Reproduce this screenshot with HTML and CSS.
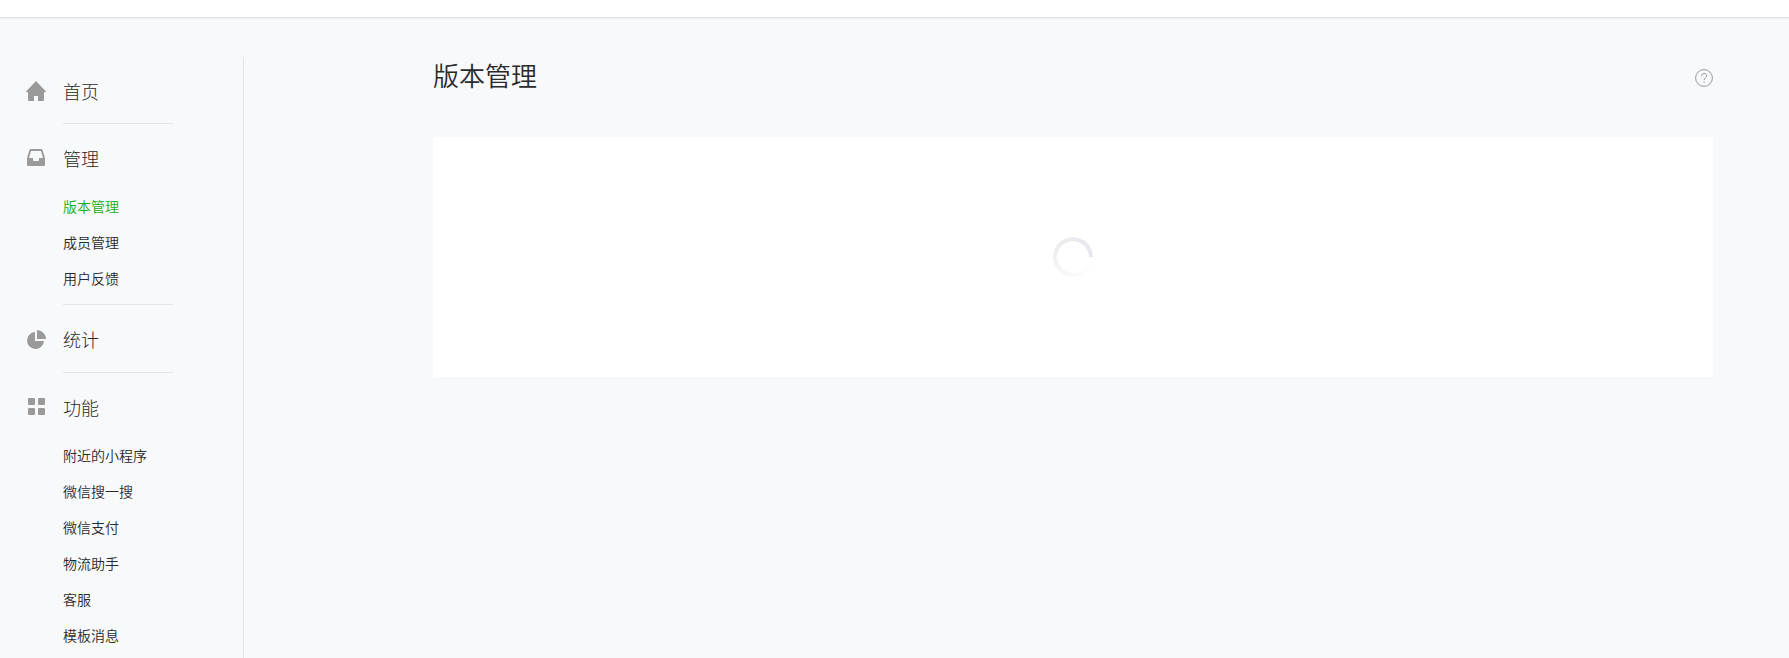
FILE: index.html
```html
<!DOCTYPE html>
<html lang="zh-CN">
<head>
    <meta charset="UTF-8">
    <meta name="viewport" content="width=device-width, initial-scale=1.0">
    <title>版本管理</title>
    <link rel="stylesheet" href="styles.css">
</head>
<body>
    <header class="header"></header>
    <div class="container">
        <nav class="side">
            <div class="menu">
                <a class="menu-title" href="#">
                    <svg class="icon" viewBox="0 0 22 22"><path d="M11 1L21.5 12H19v8a1 1 0 0 1-1 1h-5v-5H9v5H4a1 1 0 0 1-1-1v-8H.5z"/></svg>
                    首页
                </a>
            </div>
            <div class="menu">
                <a class="menu-title" href="#">
                    <svg class="icon" viewBox="0 0 22 22"><path fill-rule="evenodd" d="M5.500 2h11a1 1 0 0 1 1 .8L20 11v7a1 1 0 0 1-1 1H3a1 1 0 0 1-1-1v-7l2.500-8.200a1 1 0 0 1 1-.8zM6 4l-2 7h4v2a1 1 0 0 0 1 1h4a1 1 0 0 0 1-1v-2h4l-2-7z"/></svg>
                    管理
                </a>
                <ul class="menu-list">
                    <li><a class="active" href="#">版本管理</a></li>
                    <li><a href="#">成员管理</a></li>
                    <li><a href="#">用户反馈</a></li>
                </ul>
            </div>
            <div class="menu">
                <a class="menu-title" href="#">
                    <svg class="icon" viewBox="0 0 22 22"><path d="M10 4v9h9a8.500 8.500 0 1 1-9-9z"/><path d="M12 2a9 9 0 0 1 9 9h-9z"/></svg>
                    统计
                </a>
            </div>
            <div class="menu">
                <a class="menu-title" href="#">
                    <svg class="icon" viewBox="0 0 22 22"><rect x="3" y="2" width="7" height="7" rx="1"/><rect x="13" y="2" width="7" height="7" rx="1"/><rect x="3" y="12" width="7" height="7" rx="1"/><rect x="13" y="12" width="7" height="7" rx="1"/></svg>
                    功能
                </a>
                <ul class="menu-list">
                    <li><a href="#">附近的小程序</a></li>
                    <li><a href="#">微信搜一搜</a></li>
                    <li><a href="#">微信支付</a></li>
                    <li><a href="#">物流助手</a></li>
                    <li><a href="#">客服</a></li>
                    <li><a href="#">模板消息</a></li>
                </ul>
            </div>
        </nav>
        <main class="main">
            <div class="main-head">
                <h2>版本管理</h2>
                <a class="help" href="#" aria-label="帮助">
                    <svg viewBox="0 0 18 18"><circle cx="9" cy="9" r="8.400"/><path d="M6.500 7.200C6.500 5.400 7.600 4.500 9 4.500s2.600.9 2.600 2.400c0 1.900-2.500 2-2.500 4.300M9.100 12.500v1.300"/></svg>
                </a>
            </div>
            <div class="card">
                <div class="loading"></div>
            </div>
        </main>
    </div>
</body>
</html>
```
FILE: styles.css
```css
body {
    margin: 0;
    min-height: 100vh;
    display: flex;
    flex-direction: column;
    background-color: #f8f9fb;
    color: #2a2a2a;
    font-family: "Noto Sans CJK SC", sans-serif;
    font-weight: 350;
    font-size: 14px;
}
a {
    color: inherit;
    text-decoration: none;
}
.header {
    height: 17px;
    background: #fff;
    border-bottom: 1px solid #e0e1e3;
    box-shadow: 0 1px 2px rgba(0, 0, 0, 0.05);
}
.container {
    flex: 1;
    display: flex;
    padding-top: 39px;
}
.side {
    width: 243px;
    flex-shrink: 0;
    border-right: 1px solid #e4e5e7;
}
.menu {
    padding-bottom: 3px;
}
.menu:first-child {
    padding-bottom: 2px;
}
.menu:last-child {
    padding-bottom: 0;
}
/* divider between menu groups */
.menu + .menu::before {
    content: "";
    display: block;
    width: 110px;
    height: 1px;
    margin-left: 63px;
    background: #e4e5e7;
}
.menu-title {
    display: flex;
    align-items: center;
    gap: 16px;
    box-sizing: border-box;
    height: 64px;
    padding: 3px 0 0 25px;
    font-size: 18px;
    font-weight: 300;
}
.icon {
    width: 22px;
    height: 22px;
    fill: #9a9a9a;
}
.menu-list {
    list-style: none;
    margin: 0;
    padding: 0 0 5px 63px;
}
.menu:last-child .menu-list {
    padding-bottom: 0;
}
.menu-list a {
    display: block;
    line-height: 36px;
}
.menu-list .active {
    color: #1aad19;
}
.main {
    flex: 1;
    padding: 0 76px 0 189px;
}
.main-head {
    display: flex;
    align-items: flex-start;
    justify-content: space-between;
    height: 40px;
    margin-bottom: 40px;
}
h2 {
    margin: 0;
    font-size: 26px;
    font-weight: 350;
    line-height: 36px;
}
.help {
    padding-top: 12px;
}
.help svg {
    display: block;
    width: 18px;
    height: 18px;
    fill: none;
    stroke: #9a9a9a;
}
.card {
    display: flex;
    align-items: center;
    justify-content: center;
    height: 240px;
    background: #fff;
}
.loading {
    width: 40px;
    height: 40px;
    border-radius: 50%;
    background: conic-gradient(from 90deg, #fff, #fafafc 25%, #ececf1 60%, #e6e6ec);
    -webkit-mask: radial-gradient(closest-side, transparent 78%, #000 80%);
    mask: radial-gradient(closest-side, transparent 78%, #000 80%);
}
```
